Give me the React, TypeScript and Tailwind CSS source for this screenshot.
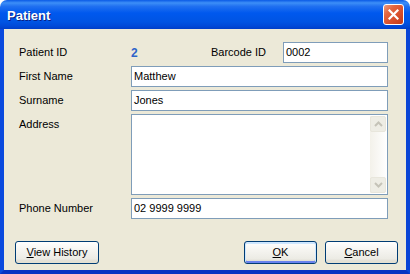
import React from "react";

const font = "font-['Liberation_Sans',Arial,sans-serif]";

function Input({ value, className = "" }: { value?: string; className?: string }) {
  return (
    <div
      className={`h-[21px] border border-[#7f9db9] bg-white px-[2px] flex items-center text-[11px] text-black ${className}`}
    >
      {value}
    </div>
  );
}

function Label({ children, className = "" }: { children: React.ReactNode; className?: string }) {
  return (
    <div className={`h-[21px] flex items-center text-[11px] text-black ${className}`}>{children}</div>
  );
}

function Arrow({ up }: { up: boolean }) {
  return (
    <svg width="9" height="6" viewBox="0 0 9 6">
      <path
        d={up ? "M1 5 L4.5 1.5 L8 5" : "M1 1 L4.5 4.5 L8 1"}
        fill="none"
        stroke="#c5c3b8"
        strokeWidth="2"
      />
    </svg>
  );
}

function XPButton({
  children,
  focused = false,
  className = "",
}: {
  children: React.ReactNode;
  focused?: boolean;
  className?: string;
}) {
  return (
    <div
      className={`h-[23px] rounded-[3px] border border-[#003c74] flex items-center justify-center text-[11px] text-black bg-[linear-gradient(to_bottom,#ffffff_0%,#f5f4f0_40%,#ecebe4_80%,#d6d0c5_100%)] ${
        focused
          ? "shadow-[inset_0_1px_0_1px_#cee7ff,inset_0_-1px_0_1px_#6982ee]"
          : "shadow-[inset_0_-2px_0_0_#e3e0d3]"
      } ${className}`}
    >
      {children}
    </div>
  );
}

export default function App() {
  return (
    <div className={`w-[410px] h-[274px] bg-white ${font}`}>
      <div className="w-[410px] h-[274px] flex flex-col">
        {/* Title bar */}
        <div className="h-[29px] shrink-0 rounded-t-[7px] bg-[linear-gradient(to_bottom,#0a5ae6_0%,#3d8ff7_10%,#2070f0_22%,#0058ee_45%,#0054e3_75%,#0049d8_90%,#003ec8_100%)] flex items-center pl-[7px] pr-[6px]">
          <div className="text-[13px] font-bold text-white leading-none [text-shadow:1px_1px_0_#0a1e80] flex-1 pt-[1px]">
            Patient
          </div>
          <div className="w-[21px] h-[21px] rounded-[3px] border border-white bg-[linear-gradient(135deg,#eb9c82_0%,#e3663f_30%,#d9502d_60%,#c23a18_100%)] flex items-center justify-center">
            <svg width="11" height="11" viewBox="0 0 11 11">
              <path d="M1.5 1.5 L9.5 9.5 M9.5 1.5 L1.5 9.5" stroke="white" strokeWidth="2.2" strokeLinecap="square" />
            </svg>
          </div>
        </div>

        {/* Body */}
        <div className="flex-1 flex flex-col bg-[#ece9d8] border-l-4 border-r-4 border-b-4 border-l-[#0a4ade] border-r-[#0a45d6] border-b-[#0733c2] pt-[13px] pl-[15px] pr-[18px]">
          <div className="flex flex-col gap-[3px]">
            <div className="flex">
              <Label className="w-[112px]">Patient ID</Label>
              <Label className="w-[80px] font-bold text-[12px] text-[#2e63c9]!">2</Label>
              <Label className="w-[72px]">Barcode ID</Label>
              <Input value="0002" className="w-[105px]" />
            </div>
            <div className="flex">
              <Label className="w-[112px]">First Name</Label>
              <Input value="Matthew" className="flex-1" />
            </div>
            <div className="flex">
              <Label className="w-[112px]">Surname</Label>
              <Input value="Jones" className="flex-1" />
            </div>
            <div className="flex">
              <Label className="w-[112px] self-start">Address</Label>
              <div className="flex-1 h-[81px] border border-[#7f9db9] bg-white flex justify-end p-[1px]">
                <div className="w-[16px] flex flex-col bg-[linear-gradient(to_right,#f3f1ea,#fefefe)]">
                  <div className="h-[16px] rounded-[2px] border border-[#e8e6dc] bg-[#eeede5] flex items-center justify-center">
                    <Arrow up />
                  </div>
                  <div className="flex-1" />
                  <div className="h-[16px] rounded-[2px] border border-[#e8e6dc] bg-[#eeede5] flex items-center justify-center">
                    <Arrow up={false} />
                  </div>
                </div>
              </div>
            </div>
            <div className="flex">
              <Label className="w-[112px]">Phone Number</Label>
              <Input value="02 9999 9999" className="flex-1" />
            </div>
          </div>

          <div className="flex-1" />

          <div className="flex items-center pb-[6px] -ml-[4px] -mr-[10px]">
            <XPButton className="w-[84px]">
              <span>
                <u>V</u>iew History
              </span>
            </XPButton>
            <div className="flex-1" />
            <XPButton focused className="w-[73px]">
              <span>
                <u>O</u>K
              </span>
            </XPButton>
            <XPButton className="w-[73px] ml-[8px]">
              <span>
                <u>C</u>ancel
              </span>
            </XPButton>
          </div>
        </div>
      </div>
    </div>
  );
}
